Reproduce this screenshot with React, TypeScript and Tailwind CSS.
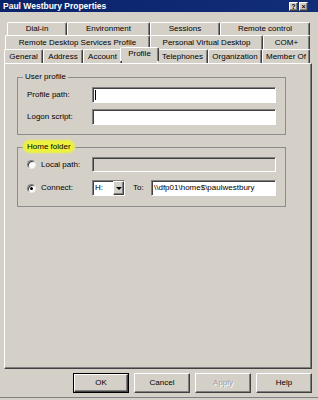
import { ReactNode } from 'react';

const raised =
    'border border-t-white border-l-white border-r-[#404040] border-b-[#404040] shadow-[inset_-1px_-1px_0_#808080]';
const sunken =
    'border border-t-[#808080] border-l-[#808080] border-r-white border-b-white shadow-[inset_1px_1px_0_#404040]';
const tab =
    'h-full flex items-center justify-center border-t border-l border-r border-t-white border-l-white border-r-[#404040] rounded-t-[2px] shadow-[inset_-1px_0_0_#808080]';

const row1 = [
    { label: 'Dial-in', w: 'w-[60px]' },
    { label: 'Environment', w: 'w-[83px]' },
    { label: 'Sessions', w: 'w-[70px]' },
    { label: 'Remote control', w: 'w-[90px]' },
];

const row2 = [
    { label: 'Remote Desktop Services Profile', w: 'w-[145px]' },
    { label: 'Personal Virtual Desktop', w: 'w-[113px]' },
    { label: 'COM+', w: 'w-[47px]' },
];

const row3 = [
    { label: 'General', w: 'w-[39px]' },
    { label: 'Address', w: 'w-[40px]' },
    { label: 'Account', w: 'w-[39px]' },
    { label: 'Profile', w: 'w-[35px]', active: true },
    { label: 'Telephones', w: 'w-[51px]' },
    { label: 'Organization', w: 'w-[54px]' },
    { label: 'Member Of', w: 'w-[48px]' },
];

function Radio({ checked }: { checked?: boolean }) {
    return (
        <span className="w-[9px] h-[9px] rounded-full bg-white border border-t-[#808080] border-l-[#808080] border-r-[#e8e8e8] border-b-[#e8e8e8] shadow-[inset_1px_1px_0_#404040] flex items-center justify-center shrink-0">
            {checked && <span className="w-[3px] h-[3px] rounded-full bg-black" />}
        </span>
    );
}

function GroupBox({
    title,
    highlight,
    className,
    children,
}: {
    title: string;
    highlight?: boolean;
    className?: string;
    children: ReactNode;
}) {
    return (
        <fieldset className={`w-[269px] border border-[#8c8c8c] p-0 m-0 ${className ?? ''}`}>
            <legend className="ml-[5px] px-[2px] leading-[10px]">
                {highlight ? (
                    <span className="bg-[#eef23c] rounded-full px-[2px] shadow-[0_0_2px_2px_#eef23c]">
                        {title}
                    </span>
                ) : (
                    title
                )}
            </legend>
            {children}
        </fieldset>
    );
}

export default function App() {
    return (
        <div className="w-[318px] h-[400px] overflow-hidden bg-[#d4d0c8] text-black text-[8px] leading-[10px] font-['Liberation_Sans',Arial,sans-serif] flex flex-col">
            {/* title bar */}
            <div className="h-[12px] shrink-0 flex items-center pl-[3px] pr-[10px] bg-gradient-to-r from-[#0a246a] to-[#122e78]">
                <span className="text-white font-bold text-[8.5px] flex-1">
                    Paul Westbury Properties
                </span>
                <div className="flex gap-[1px]">
                    <span className={`${raised} w-[9px] h-[9px] bg-[#d4d0c8] flex items-center justify-center text-[7px] font-bold leading-none`}>
                        ?
                    </span>
                    <span className={`${raised} w-[9px] h-[9px] bg-[#d4d0c8] flex items-center justify-center text-[7px] font-bold leading-none`}>
                        ×
                    </span>
                </div>
            </div>

            {/* tabs */}
            <div className="pt-[10px] flex flex-col">
                <div className="flex h-[13px] pl-[7px]">
                    {row1.map((t) => (
                        <div key={t.label} className={`${tab} ${t.w}`}>
                            {t.label}
                        </div>
                    ))}
                </div>
                <div className="flex h-[14px] pl-[5px]">
                    {row2.map((t) => (
                        <div key={t.label} className={`${tab} ${t.w}`}>
                            {t.label}
                        </div>
                    ))}
                </div>
                <div className="flex h-[14px] pl-[4px]">
                    {row3.map((t) =>
                        t.active ? (
                            <div
                                key={t.label}
                                className={`${tab} w-[39px] h-[17px] -mt-[2px] -mx-[2px] relative z-10 bg-[#d4d0c8] pb-[2px]`}
                            >
                                {t.label}
                            </div>
                        ) : (
                            <div key={t.label} className={`${tab} ${t.w}`}>
                                {t.label}
                            </div>
                        )
                    )}
                </div>
            </div>

            {/* panel */}
            <div className={`${raised} ml-[4px] w-[308px] h-[306px] shrink-0 pt-[8px] pl-[12px]`}>
                <GroupBox title="User profile">
                    <div className="pt-[5px] pb-[9px] pl-[9px] flex flex-col gap-[6px]">
                        <div className="flex items-center">
                            <span className="w-[65px]">Profile path:</span>
                            <div className={`${sunken} w-[184px] h-[16px] bg-white flex items-center pl-[2px]`}>
                                <span className="w-px h-[10px] bg-black" />
                            </div>
                        </div>
                        <div className="flex items-center">
                            <span className="w-[65px]">Logon script:</span>
                            <div className={`${sunken} w-[184px] h-[16px] bg-white`} />
                        </div>
                    </div>
                </GroupBox>

                <GroupBox title="Home folder" highlight className="mt-[7px]">
                    <div className="pt-[5px] pb-[10px] pl-[9px] flex flex-col gap-[8px]">
                        <div className="flex items-center">
                            <div className="w-[65px] flex items-center gap-[5px]">
                                <Radio />
                                <span>Local path:</span>
                            </div>
                            <div className={`${sunken} w-[184px] h-[15px] bg-[#d4d0c8]`} />
                        </div>
                        <div className="flex items-center">
                            <div className="w-[65px] flex items-center gap-[5px]">
                                <Radio checked />
                                <span>Connect:</span>
                            </div>
                            <div className={`${sunken} w-[33px] h-[16px] bg-white flex items-center`}>
                                <span className="flex-1 pl-[2px]">H:</span>
                                <span className={`${raised} w-[11px] h-full bg-[#d4d0c8] flex items-center justify-center`}>
                                    <span className="w-0 h-0 border-l-[3px] border-r-[3px] border-t-[3px] border-l-transparent border-r-transparent border-t-black" />
                                </span>
                            </div>
                            <span className="w-[26px] pl-[8px]">To:</span>
                            <div className={`${sunken} w-[125px] h-[16px] bg-white flex items-center pl-[2px]`}>
                                \\dfp01\home$\paulwestbury
                            </div>
                        </div>
                    </div>
                </GroupBox>
            </div>

            {/* buttons */}
            <div className="mt-[4px] flex justify-end gap-[5px] pr-[6px]">
                <button className="w-[56px] h-[20px] border border-black p-0">
                    <span className={`${raised} w-full h-full flex items-center justify-center`}>OK</span>
                </button>
                <button className={`${raised} w-[56px] h-[20px] flex items-center justify-center`}>
                    Cancel
                </button>
                <button className={`${raised} w-[56px] h-[20px] flex items-center justify-center text-[#a0a0a0] [text-shadow:1px_1px_0_#fff]`}>
                    Apply
                </button>
                <button className={`${raised} w-[56px] h-[20px] flex items-center justify-center`}>
                    Help
                </button>
            </div>
            <div className="mt-[4px] h-px bg-[#808080]" />
        </div>
    );
}
